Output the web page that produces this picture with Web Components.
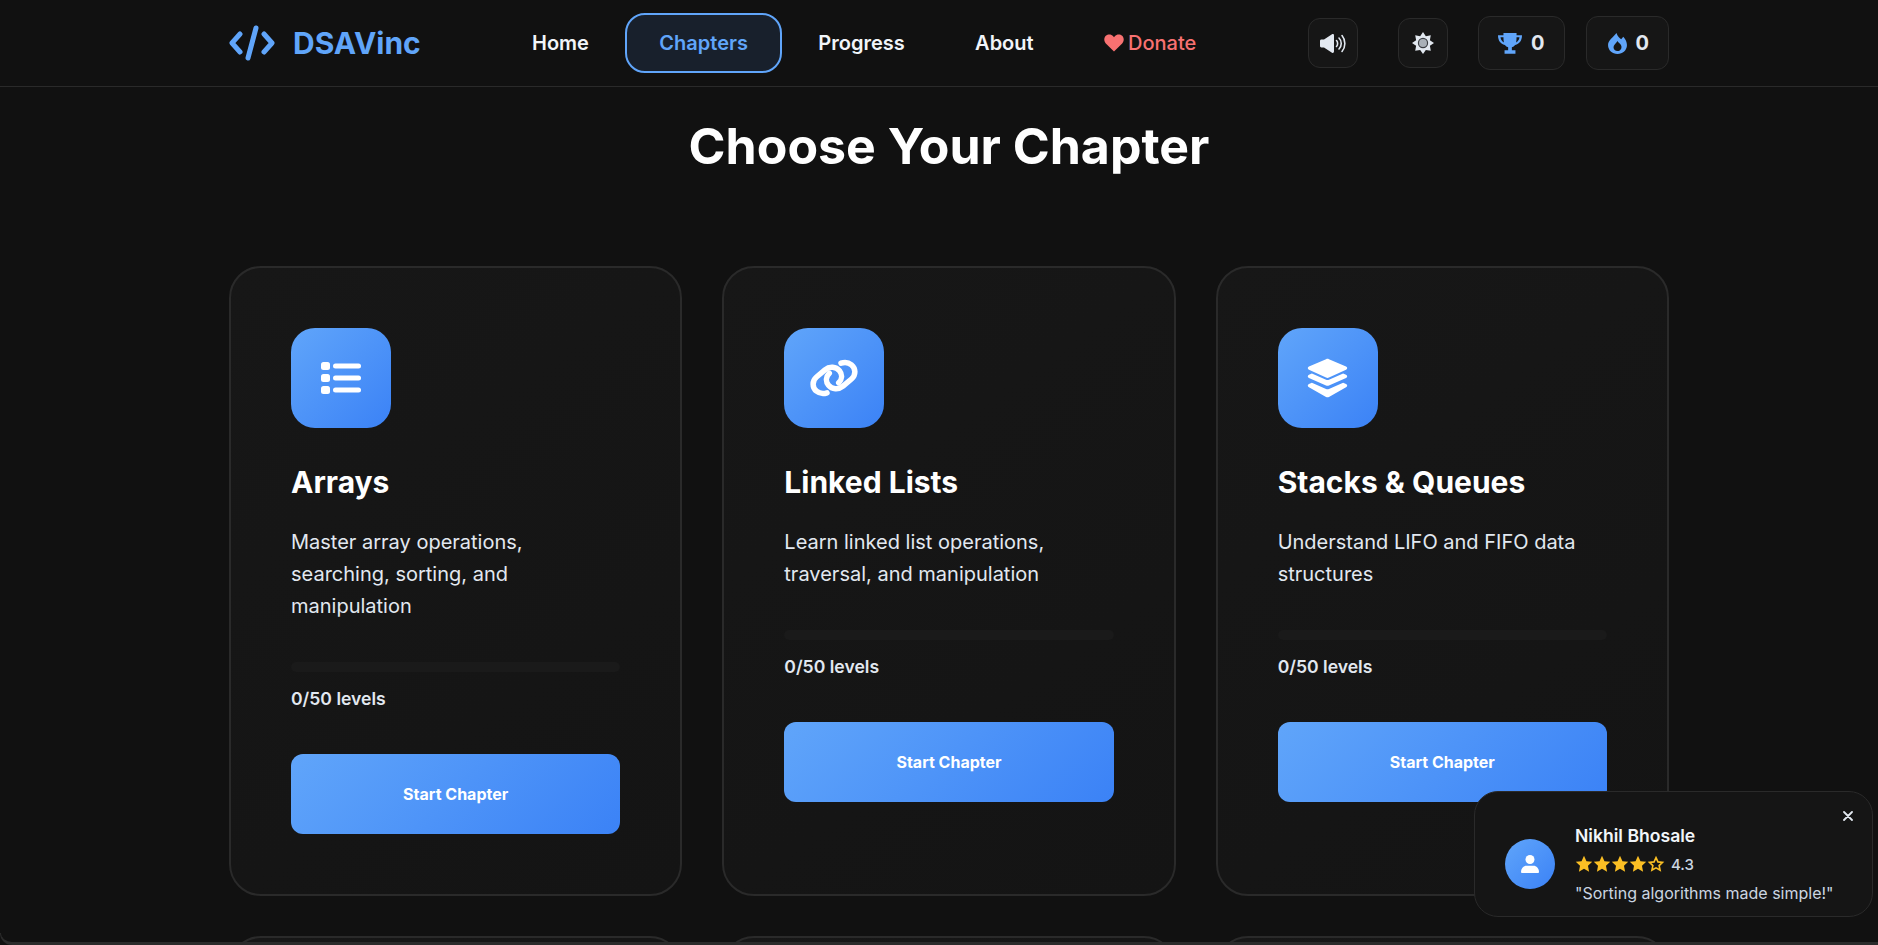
<!DOCTYPE html>
<html>
  <head>
    <title>DSAVinc - Chapters</title>
    <meta name="viewport" content="width=device-width, initial-scale=1.0">
    <style>
      html, body { margin: 0; height: 945px; overflow: hidden; }
      body { background: #111111; color: #fff; font-family: Inter, "Liberation Sans", sans-serif; }
    </style>
    <script>
      const ICONS = {
        volume: `<svg viewBox="0 0 26 19" width="26" height="19" fill="currentColor"><path d="M0 7c0-.8 .6-1.400 1.400-1.400H4L12 .3c1-.5 2 0 2 1.100v16.200c0 1.100-1 1.600-2 1.100L4 13.400H1.400C.6 13.400 0 12.800 0 12z"/><g fill="none" stroke="currentColor" stroke-width="1.600" stroke-linecap="round"><path d="M16.500 6.500c1.500 1.500 1.500 4.500 0 6"/><path d="M19 4c3 3 3 8 0 11"/><path d="M22 1.500c3.800 4.500 3.800 11.500 0 16"/></g></svg>`,
        sun: `<svg viewBox="0 0 24 24" width="22" height="22"><path fill="currentColor" d="M12 0l3.100 4.500 5.400-1 -1 5.400L24 12l-4.500 3.100 1 5.400-5.400-1L12 24l-3.100-4.500-5.400 1 1-5.400L0 12l4.500-3.100-1-5.400 5.400 1z"/><circle cx="12" cy="12" r="5" fill="#a9b0b8" stroke="#3a3d42" stroke-width="1.300"/></svg>`,
        trophy: `<svg viewBox="1 1.500 22 21" width="24" height="21" preserveAspectRatio="none" fill="#60a5fa"><path d="M6 1.500h12v2.200h5c0 5.300-2.300 8.700-6.300 9.700-.8 1.200-1.800 2-3 2.400v3h3.300v3.400H7v-3.400h3.300v-3c-1.200-.4-2.200-1.200-3-2.400C3.300 12.400 1 9 1 3.700h5zM3.300 5.800c.3 2.400 1.300 4.200 3.100 5.100-.3-1.500-.4-3.200-.4-5.100zm17.400 0H18c0 1.900-.1 3.600-.4 5.100 1.800-.9 2.800-2.700 3.100-5.100z"/></svg>`,
        fire: `<svg viewBox="0 0 18 20" width="19" height="21" style="margin-left:2px"><path fill="#60a5fa" d="M8 0c1 3 3 5 4.500 6l2-2.500C16.800 6 18 8.500 18 11.500 18 16.500 14 20 9 20s-9-3.500-9-8.500C0 7 5 4 8 0z"/><path fill="#161616" d="M9 7.500c.6 1.300 2 2 2.800 3.200 .9 1.300 1.300 2.600 .8 4C12 16.300 10.500 17.200 9 17.200c-2.100 0-3.800-1.600-3.800-3.700C5.200 11.300 7.500 9.800 9 7.500z"/></svg>`,
        list: `<svg viewBox="0 0 40 32" width="40" height="32" fill="#fff"><rect x="0" y="0" width="9" height="8" rx="2.500"/><rect x="0" y="12" width="9" height="8" rx="2.500"/><rect x="0" y="24" width="9" height="8" rx="2.500"/><rect x="12" y="1.500" width="28" height="5" rx="2.500"/><rect x="12" y="13.500" width="28" height="5" rx="2.500"/><rect x="12" y="25.500" width="28" height="5" rx="2.500"/></svg>`,
        link: `<svg viewBox="0 0 48 38" width="48" height="38" fill="none" stroke="#fff" stroke-width="5.500" stroke-linecap="round" stroke-linejoin="round"><path d="M17 33.800c-3.500 1.200-7.500 .8-10.500-1.600C2 28.500 2 21.800 6.500 18l8.500-7.200c4.500-3.700 11-3.200 14.500 1 3 3.700 2.700 8.600-.8 12"/><path d="M31 4.200c3.500-1.200 7.500-.8 10.500 1.600C46 9.500 46 16.200 41.500 20L33 27.200c-4.500 3.700-11 3.200-14.500-1-3-3.700-2.700-8.600 .8-12"/></svg>`,
        layers: `<svg viewBox="0 0 42 40" width="41" height="40" fill="#fff"><path d="M19.500 .7c1-.4 2-.4 3 0l17.500 7.500c1.600 .7 1.600 2.600 0 3.300L22.500 19.600c-1 .4-2 .4-3 0L2 11.500c-1.600-.7-1.600-2.600 0-3.300z"/><path d="M5 15.300l14.500 6.500c1 .4 2 .4 3 0L37 15.300l3 1.300c1.600 .7 1.600 2.600 0 3.300l-17.500 7.800c-1 .4-2 .4-3 0L2 19.900c-1.600-.7-1.600-2.600 0-3.300z"/><path d="M5 24.800l14.500 6.500c1 .4 2 .4 3 0L37 24.800l3 1.300c1.600 .7 1.600 2.600 0 3.300l-17.500 10c-1 .4-2 .4-3 0L2 29.400c-1.600-.7-1.600-2.600 0-3.300z"/></svg>`
      };

      class SiteHeader extends HTMLElement {
        constructor() {
          super();
          this.attachShadow({ mode: 'open' }).innerHTML = `
            <style>
              :host { display: block; height: 86px; border-bottom: 1px solid #2a2a2a; }
              .bar { display: flex; align-items: center; height: 86px; width: 1440px; margin-left: 229px; }
              .logo { display: flex; align-items: center; gap: 18px; font-size: 30px; font-weight: 700; color: #60a5fa; width: 269px; }
              nav { display: flex; align-items: center; gap: 2.400px; }
              a { display: block; font-size: 20px; font-weight: 600; color: #f1f5f9; padding: 0 32px; border: 2px solid transparent; }
              a.active { color: #60a5fa; background: #18202c; border-color: #60a5fa; border-radius: 20px; height: 56px; line-height: 56px; }
              a.donate { color: #f87171; font-weight: 500; display: flex; gap: 4px; align-items: center; }
              .tools { display: flex; align-items: center; margin-left: auto; }
              .tool { display: flex; align-items: center; justify-content: center; gap: 9px; box-sizing: border-box; background: #161616; border: 1px solid #2a2a2a; border-radius: 12px; color: #e2e8f0; font-size: 20px; font-weight: 700; }
              .sq { width: 50px; height: 50px; margin-right: 40px; }
              .stat { height: 54px; padding: 0 19px; }
            </style>
            <div class="bar">
              <div class="logo">
                <svg viewBox="0 0 46 36" width="46" height="36" fill="none" stroke="#60a5fa" stroke-width="5" stroke-linecap="round" stroke-linejoin="round"><path d="M11 9L3 18l8 9M35 9l8 9-8 9M27 3l-8 30"/></svg>
                <span>DSAVinc</span>
              </div>
              <nav>
                <a>Home</a>
                <a class="active">Chapters</a>
                <a>Progress</a>
                <a>About</a>
                <a class="donate"><svg viewBox="0 0 24 22" width="20" height="18" fill="#f87171"><path d="M12 21.500L2 11.500C-.5 8.800-.5 4.500 2 2.200c2.800-2.500 6.800-2 9 .5l1 1.200 1-1.200c2.200-2.500 6.200-3 9-.5 2.500 2.300 2.500 6.600 0 9.300z"/></svg><span>Donate</span></a>
              </nav>
              <div class="tools">
                <div class="tool sq">${ICONS.volume}</div>
                <div class="tool sq" style="margin-right:30px">${ICONS.sun}</div>
                <div class="tool stat" style="margin-right:21px">${ICONS.trophy}<span>0</span></div>
                <div class="tool stat">${ICONS.fire}<span>0</span></div>
              </div>
            </div>
          `;
        }
      }

      class ChapterCard extends HTMLElement {
        constructor() {
          super();
          this.attachShadow({ mode: 'open' });
        }

        connectedCallback() {
          const icon = ICONS[this.getAttribute('icon')];
          const style = `
            <style>
              :host { display: block; box-sizing: border-box; padding: 60px; background: linear-gradient(145deg, #171717, #141414); border: 2px solid #2a2a2a; border-radius: 32px; }
              .icon { width: 100px; height: 100px; border-radius: 24px; background: linear-gradient(135deg, #60a5fa, #3b82f6); display: flex; align-items: center; justify-content: center; margin-bottom: 32px; }
              h3 { margin: 0 0 21.600px; font-size: 30px; line-height: 44px; font-weight: 700; color: #fff; }
              p { margin: 0 0 39.500px; font-size: 20px; line-height: 32.400px; color: #e2e8f0; }
              .track { height: 10px; border-radius: 5px; background: #1a1a1a; margin-bottom: 13px; }
              .levels { font-size: 17.600px; font-weight: 600; line-height: 27px; color: #e2e8f0; margin-bottom: 42px; }
              button { display: block; width: 100%; height: 80px; border: 0; border-radius: 12px; background: linear-gradient(135deg, #60a5fa, #3b82f6); color: #fff; font: 700 16px Inter, "Liberation Sans", sans-serif; }
            </style>`;
          // the second row only peeks in at the bottom of the frame
          this.shadowRoot.innerHTML = !icon ? style : `${style}
            <div class="icon">${icon}</div>
            <h3><slot name="name"></slot></h3>
            <p><slot></slot></p>
            <div class="track"></div>
            <div class="levels">0/50 levels</div>
            <button>Start Chapter</button>
          `;
        }
      }

      class ChapterGrid extends HTMLElement {
        constructor() {
          super();
          this.attachShadow({ mode: 'open' }).innerHTML = `
            <style>
              :host { display: grid; grid-template-columns: repeat(3, 1fr); gap: 40px; width: 1440px; margin-left: 229px; }
            </style>
            <slot></slot>
          `;
        }
      }

      class PageTitle extends HTMLElement {
        constructor() {
          super();
          this.attachShadow({ mode: 'open' }).innerHTML = `
            <style>
              :host { display: block; width: 1440px; margin-left: 229px; padding-top: 25px; height: 154px; text-align: center; font-size: 50px; line-height: 68px; font-weight: 700; color: #fff; }
            </style>
            <slot></slot>
          `;
        }
      }

      class ReviewToast extends HTMLElement {
        constructor() {
          super();
          const star = `<svg viewBox="0 0 24 24" width="18" height="18"><path fill="#fbbf24" d="M12 1l3.300 7.200 7.700 .9-5.700 5.300 1.500 7.800L12 18.300l-6.800 3.900 1.500-7.800L1 9.100l7.700-.9z"/></svg>`;
          const empty = `<svg viewBox="0 0 24 24" width="18" height="18"><path fill="none" stroke="#fbbf24" stroke-width="2.200" d="M12 3.600l2.600 5.600 6 .7-4.400 4.200 1.200 6-5.400-3-5.400 3 1.200-6-4.400-4.200 6-.7z"/></svg>`;
          this.attachShadow({ mode: 'open' }).innerHTML = `
            <style>
              :host { position: fixed; left: 1474px; top: 791px; width: 399px; height: 126px; box-sizing: border-box; display: flex; align-items: center; gap: 20px; padding: 20px 30px 0; background: #151515; border: 1px solid #2a2a2a; border-radius: 24px; }
              .avatar { flex: none; width: 50px; height: 50px; border-radius: 50%; background: linear-gradient(135deg, #60a5fa, #3b82f6); display: flex; align-items: center; justify-content: center; }
              .name { font-size: 17.600px; font-weight: 600; line-height: 26px; margin-top: 1px; margin-bottom: -1px; color: #f1f5f9; }
              .rating { display: flex; align-items: center; height: 24px; margin: 4px 0; font-size: 15px; font-weight: 500; color: #cbd5e1; }
              .rating span { margin-left: 6px; }
              .quote { font-size: 16px; line-height: 26px; color: #cbd5e1; white-space: nowrap; }
              .close { position: absolute; right: 19px; top: 19px; }
            </style>
            <div class="avatar"><svg viewBox="0 0 20 22" width="18" height="20" fill="#fff"><circle cx="10" cy="6" r="5"/><path d="M1 21c-.6 0-1-.4-1-1 0-4 3-7 6-7h8c3 0 6 3 6 7 0 .6-.4 1-1 1z"/></svg></div>
            <div>
              <div class="name"><slot></slot></div>
              <div class="rating">${star}${star}${star}${star}${empty}<span>4.3</span></div>
              <div class="quote"><slot name="quote"></slot></div>
            </div>
            <svg class="close" viewBox="0 0 10 10" width="10" height="10" stroke="#e2e8f0" stroke-width="1.800" stroke-linecap="round"><path d="M1 1l8 8M9 1l-8 8"/></svg>
          `;
        }
      }

      class WindowEdge extends HTMLElement {
        constructor() {
          super();
          this.attachShadow({ mode: 'open' }).innerHTML = `
            <style>
              :host { position: fixed; left: 0; right: 0; bottom: 0; height: 12px; box-sizing: border-box; border-bottom: 3px solid #2b2b2b; border-left: 1px solid #2b2b2b; border-radius: 0 0 0 12px; }
            </style>
          `;
        }
      }

      customElements.define('site-header', SiteHeader);
      customElements.define('page-title', PageTitle);
      customElements.define('chapter-grid', ChapterGrid);
      customElements.define('chapter-card', ChapterCard);
      customElements.define('review-toast', ReviewToast);
      customElements.define('window-edge', WindowEdge);
    </script>
  </head>
  <body>
    <site-header></site-header>
    <page-title>Choose Your Chapter</page-title>
    <chapter-grid>
      <chapter-card icon="list"><span slot="name">Arrays</span>Master array operations, searching, sorting, and manipulation</chapter-card>
      <chapter-card icon="link"><span slot="name">Linked Lists</span>Learn linked list operations, traversal, and manipulation</chapter-card>
      <chapter-card icon="layers"><span slot="name">Stacks &amp; Queues</span>Understand LIFO and FIFO data structures</chapter-card>
      <chapter-card></chapter-card>
      <chapter-card></chapter-card>
      <chapter-card></chapter-card>
    </chapter-grid>
    <review-toast>Nikhil Bhosale<span slot="quote">"Sorting algorithms made simple!"</span></review-toast>
    <window-edge></window-edge>
  </body>
</html>
